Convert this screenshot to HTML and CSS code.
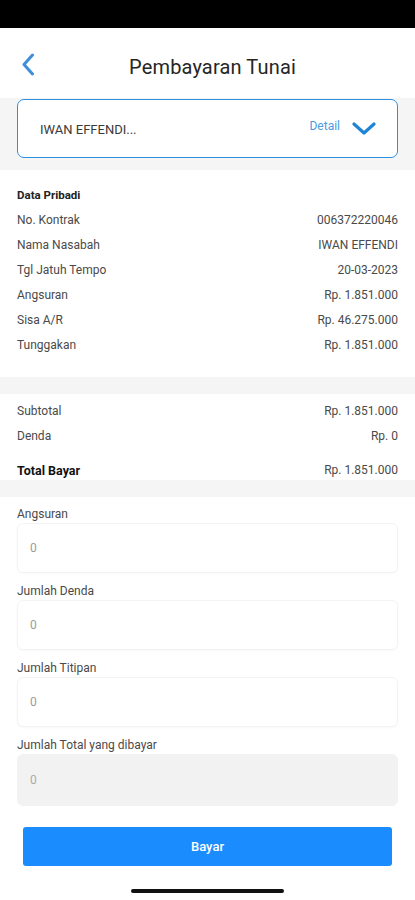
FILE: index.html
```html
<!DOCTYPE html>
<html lang="id">
<head>
<meta charset="utf-8">
<title>Pembayaran Tunai</title>
<link rel="stylesheet" href="styles.css">
</head>
<body>
<div class="status"></div>
<header class="header">
  <div class="back">
    <svg width="14" height="23" viewBox="0 0 14 23"><path d="M11.5 2 L3 11.5 L11.5 21" fill="none" stroke="#3d8edb" stroke-width="3" stroke-linecap="round" stroke-linejoin="round"/></svg>
  </div>
  <h1 class="title">Pembayaran Tunai</h1>
  <div></div>
</header>
<section class="band">
  <div class="card">
    <span class="card-name">IWAN EFFENDI...</span>
    <span class="detail">Detail</span>
    <svg class="chev" width="24" height="13" viewBox="0 0 24 13"><path d="M2 2 L12 11 L22 2" fill="none" stroke="#1f85d6" stroke-width="3.2" stroke-linecap="round" stroke-linejoin="round"/></svg>
  </div>
</section>
<section class="info">
  <div class="row head"><span>Data Pribadi</span></div>
  <div class="row"><span>No. Kontrak</span><span>006372220046</span></div>
  <div class="row"><span>Nama Nasabah</span><span>IWAN EFFENDI</span></div>
  <div class="row"><span>Tgl Jatuh Tempo</span><span>20-03-2023</span></div>
  <div class="row"><span>Angsuran</span><span>Rp. 1.851.000</span></div>
  <div class="row"><span>Sisa A/R</span><span>Rp. 46.275.000</span></div>
  <div class="row"><span>Tunggakan</span><span>Rp. 1.851.000</span></div>
</section>
<div class="sep"></div>
<section class="summary">
  <div class="row"><span>Subtotal</span><span>Rp. 1.851.000</span></div>
  <div class="row"><span>Denda</span><span>Rp. 0</span></div>
  <div class="row total"><span class="strong">Total Bayar</span><span>Rp. 1.851.000</span></div>
</section>
<div class="sep"></div>
<section class="form">
  <label class="label">Angsuran</label>
  <div class="input">0</div>
  <label class="label">Jumlah Denda</label>
  <div class="input">0</div>
  <label class="label">Jumlah Titipan</label>
  <div class="input">0</div>
  <label class="label">Jumlah Total yang dibayar</label>
  <div class="input disabled">0</div>
  <button class="pay">Bayar</button>
  <div class="home"></div>
</section>
</body>
</html>
```
FILE: styles.css
```css
* { box-sizing: border-box; }
html, body { margin: 0; padding: 0; background: #fff; }
body { font-family: Roboto, "Noto Sans", "Liberation Sans", sans-serif; color: #4a4a4a; width: 415px; height: 900px; overflow: hidden; }

.status { height: 28px; background: #000; }

.header {
  height: 70px;
  display: grid;
  grid-template-columns: 50px 1fr 40px;
  align-items: center;
}
.back { padding-left: 21px; display: flex; align-items: center; padding-top: 3px; }
.title { margin: 0; text-align: center; font-size: 20px; font-weight: 400; color: #262626; letter-spacing: 0.15px; padding-top: 7px; }

.band { background: #f5f5f5; padding: 1px 17px 12px; }
.card {
  height: 59px;
  background: #fff;
  border: 1.5px solid #2f8fdf;
  border-radius: 7px;
  display: flex;
  align-items: center;
  padding: 0 21px 0 22px;
}
.card-name { flex: 1; font-size: 13px; color: #3a3a3a; padding-top: 2px; }
.detail { font-size: 12px; color: #4a9be0; margin-right: 12px; margin-top: -5px; }

.info { padding: 12px 17px 20px; }
.row { display: flex; justify-content: space-between; align-items: center; height: 25px; font-size: 12px; color: #4a4a4a; }
.row.head { font-weight: 700; color: #222; font-size: 11.5px; }

.sep { height: 17px; background: #f5f5f5; }

.summary { padding: 4px 17px 0; }
.summary .row.total { height: 20px; margin-top: 12px; }
.strong { font-weight: 700; color: #111; font-size: 12.5px; }

.form { padding: 8px 17px 0; display: flex; flex-direction: column; }
.label { font-size: 12px; line-height: 18px; height: 18px; color: #4a4a4a; }
.input {
  height: 50px;
  border: 1px solid #f3f3f3;
  border-radius: 6px;
  box-shadow: 0 1px 2px rgba(0,0,0,0.03);
  display: flex;
  align-items: center;
  padding-left: 12px;
  font-size: 12px;
  color: #9a9a9a;
  margin-bottom: 9px;
}
.input.disabled { background: #f2f2f2; border-color: #f2f2f2; height: 52px; box-shadow: none; color: #aaa; margin-bottom: 0; }

.pay {
  margin: 21px 6px 0;
  height: 39px;
  border: 0;
  border-radius: 3px;
  background: #1a8cfd;
  color: #fff;
  font-family: inherit;
  font-size: 13px;
  font-weight: 500;
}
.home { align-self: center; width: 153px; height: 4px; border-radius: 2px; background: #111; margin-top: 23px; }
```
